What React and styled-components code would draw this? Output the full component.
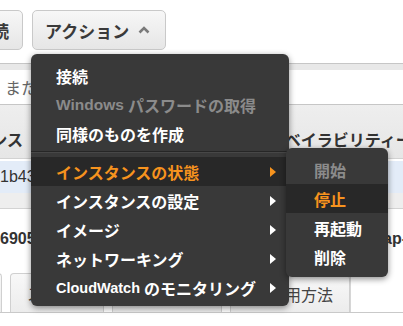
import React from "react";
import styled, { createGlobalStyle } from "styled-components";

const Global = createGlobalStyle`
  html, body { margin: 0; padding: 0; background: #fff; }
  body { font-family: "Liberation Sans", "Noto Sans CJK JP", sans-serif; }
`;

const Page = styled.div`
  position: relative;
  width: 403px;
  height: 326px;
  overflow: hidden;
  background: #fff;
  font-family: "Liberation Sans", "Noto Sans CJK JP", sans-serif;
  color: #333;
`;

const Toolbar = styled.div`
  display: flex;
  gap: 9px;
  padding-top: 10px;
  margin-left: -57px;
  height: 40px;
`;

const ToolButton = styled.div`
  box-sizing: border-box;
  width: ${(p) => p.$w}px;
  height: 40px;
  display: flex;
  align-items: center;
  justify-content: ${(p) => (p.$clipped ? "flex-end" : "flex-start")};
  gap: 9px;
  padding: ${(p) => (p.$clipped ? "0 13px 0 0" : "0 0 0 12px")};
  border: 1px solid #c9c9c9;
  border-radius: 5px;
  background: linear-gradient(#f7f7f7, #e6e6e6);
  font-size: 17px;
  font-weight: 700;
  color: #3a3a3a;
  white-space: nowrap;
`;

const FilterBar = styled.div`
  margin-top: 13px;
  border-top: 1px solid #c6c6c6;
  border-bottom: 1px solid #c6c6c6;
`;

const FilterStrip = styled.div`
  height: 6px;
  background: #e8e8e8;
`;

const SearchRow = styled.div`
  height: 34px;
  display: flex;
  align-items: center;
  padding-left: 5px;
  background: #fff;
  font-size: 16px;
  color: #666;
`;

const HeaderRow = styled.div`
  display: flex;
  height: 54px;
  box-sizing: border-box;
  padding-top: 14px;
  background: linear-gradient(#eeeeee, #e6e6e6);
  border-bottom: 1px solid #d2d2d2;
  font-size: 16px;
  font-weight: 700;
  color: #333;
`;

const HeaderCell = styled.div`
  width: ${(p) => p.$w}px;
  flex: none;
  display: flex;
  align-items: center;
  justify-content: ${(p) => (p.$end ? "flex-end" : "flex-start")};
  overflow: hidden;
  white-space: nowrap;
`;

const DataRow = styled.div`
  display: flex;
  align-items: center;
  height: ${(p) => p.$h}px;
  margin-top: ${(p) => p.$gap || 0}px;
  background: ${(p) => (p.$selected ? "#e3ecf8" : "#fff")};
  font-size: 16px;
  font-weight: ${(p) => (p.$bold ? 700 : 400)};
  color: #333;
  white-space: nowrap;
`;

const Splitter = styled.div`
  height: 15px;
  background: #eeeeee;
  border-bottom: 1px solid #d3d3d3;
`;

const LowerPane = styled.div`
  display: flex;
  height: 103px;
  border-bottom: 1px solid #c9c9c9;
`;

const LeftColumn = styled.div`
  width: 350px;
  flex: none;
  display: flex;
  flex-direction: column;
  border-right: 1px solid #d6d6d6;
`;

const RightColumn = styled.div`
  flex: 1;
  padding: 19px 0 0 32px;
  font-size: 16px;
  font-weight: 700;
  white-space: nowrap;
  line-height: 22px;
`;

const CellText = styled.div`
  padding-top: 19px;
  font-size: 16px;
  font-weight: 700;
  line-height: 22px;
  white-space: nowrap;
`;

const TabBar = styled.div`
  margin-top: auto;
  display: flex;
  gap: 8px;
  margin-left: -38px;
  height: 39px;
  align-items: flex-end;
`;

const Tab = styled.div`
  box-sizing: border-box;
  width: ${(p) => p.$w}px;
  height: ${(p) => p.$h || 39}px;
  flex: none;
  display: flex;
  align-items: center;
  justify-content: ${(p) => (p.$right ? "flex-end" : "flex-start")};
  padding: 0 16px;
  border: 1px solid #d0d0d0;
  border-bottom: none;
  border-radius: 4px 4px 0 0;
  background: linear-gradient(#f8f8f8, #ececec);
  font-size: 16px;
  color: #444;
  white-space: nowrap;
  overflow: hidden;
`;

const Menu = styled.div`
  position: absolute;
  left: ${(p) => p.$x}px;
  top: ${(p) => p.$y}px;
  width: ${(p) => p.$w}px;
  box-sizing: border-box;
  padding: ${(p) => p.$pad};
  background: #393939;
  border-radius: 6px;
  box-shadow: 0 2px 6px rgba(0, 0, 0, 0.45);
  font-family: "Liberation Sans", "Noto Sans CJK JP", sans-serif;
`;

const Item = styled.div`
  display: flex;
  align-items: center;
  height: 29px;
  padding: 0 13px 0 ${(p) => p.$indent}px;
  background: ${(p) => (p.$active ? "#282828" : "transparent")};
  color: ${(p) =>
    p.$active ? "#f7931e" : p.$disabled ? "#8b8b8b" : "#ffffff"};
  font-size: 16px;
  font-weight: 700;
  white-space: nowrap;
`;

const Latin = styled.span`
  font-size: ${(p) => p.$size || 14.5}px;
  margin-right: 4px;
`;

const Arrow = styled.span`
  margin-left: auto;
  width: 0;
  height: 0;
  border-left: 6px solid ${(p) => (p.$active ? "#f7931e" : "#ffffff")};
  border-top: 5px solid transparent;
  border-bottom: 5px solid transparent;
`;

const Separator = styled.div`
  height: 1px;
  margin: 3px 0 5px;
  background: #262626;
  box-shadow: 0 1px 0 #474747;
`;

function Caret() {
  return (
    <svg width="12" height="8" viewBox="0 0 12 8">
      <polyline
        points="1.5,6.5 6,2 10.5,6.5"
        fill="none"
        stroke="#7a7a7a"
        strokeWidth="2.6"
      />
    </svg>
  );
}

const mainItems = [
  { label: "接続" },
  { label: "パスワードの取得", latin: "Windows", size: 15.5, disabled: true },
  { label: "同様のものを作成" },
  { sep: true },
  { label: "インスタンスの状態", sub: true, active: true },
  { label: "インスタンスの設定", sub: true },
  { label: "イメージ", sub: true },
  { label: "ネットワーキング", sub: true },
  { label: "のモニタリング", latin: "CloudWatch", sub: true },
];

const subItems = [
  { label: "開始", disabled: true },
  { label: "停止", active: true },
  { label: "再起動" },
  { label: "削除" },
];

export default function App() {
  return (
    <Page>
      <Global />
      <Toolbar>
        <ToolButton $w={80} $clipped>
          接続
        </ToolButton>
        <ToolButton $w={134}>
          アクション
          <Caret />
        </ToolButton>
      </Toolbar>

      <FilterBar>
        <FilterStrip />
        <SearchRow>または検索</SearchRow>
      </FilterBar>

      <HeaderRow>
        <HeaderCell $w={23} $end>
          インスタンス
        </HeaderCell>
        <HeaderCell $w={246} />
        <HeaderCell $w={134}>アベイラビリティーゾーン</HeaderCell>
      </HeaderRow>

      <DataRow $h={32} $gap={2} $selected>
        1b43a9f2
      </DataRow>
      <Splitter />

      <LowerPane>
        <LeftColumn>
          <CellText>6905e1c</CellText>
          <TabBar>
            <Tab $w={40} />
            <Tab $w={94}>ステータス</Tab>
            <Tab $w={110}>タグ</Tab>
            <Tab $w={120} $h={37} $right>
              使用方法
            </Tab>
          </TabBar>
        </LeftColumn>
        <RightColumn>ap-northeast-1a</RightColumn>
      </LowerPane>

      <Menu $x={31} $y={54} $w={258} $pad="7px 0 4px">
        {mainItems.map((it, i) =>
          it.sep ? (
            <Separator key={i} />
          ) : (
            <Item
              key={i}
              $indent={25}
              $active={it.active}
              $disabled={it.disabled}
            >
              {it.latin && <Latin $size={it.size}>{it.latin}</Latin>}
              {it.label}
              {it.sub && <Arrow $active={it.active} />}
            </Item>
          )
        )}
        <Menu $x={255} $y={94} $w={102} $pad="7px 0 6px">
          {subItems.map((it, i) => (
            <Item
              key={i}
              $indent={28}
              $active={it.active}
              $disabled={it.disabled}
            >
              {it.label}
            </Item>
          ))}
        </Menu>
      </Menu>
    </Page>
  );
}
